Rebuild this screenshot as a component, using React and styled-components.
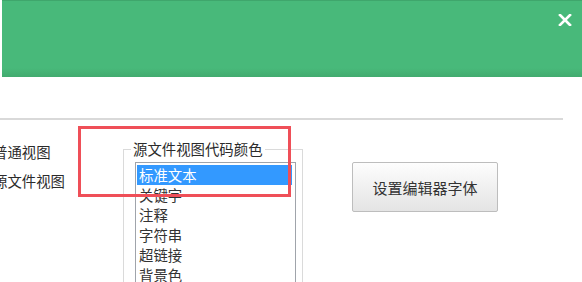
import React from 'react'
import styled, { createGlobalStyle } from 'styled-components'

const GlobalStyle = createGlobalStyle`
  html, body {
    margin: 0;
    padding: 0;
    background: #ffffff;
  }
  body {
    font-family: "Noto Sans CJK SC", "Liberation Sans", sans-serif;
    color: #333333;
  }
`

const Page = styled.div`
  position: relative;
  width: 582px;
  height: 282px;
  overflow: hidden;
  background: #ffffff;
`

const TitleBar = styled.header`
  height: 77px;
  margin-left: 2px;
  box-sizing: border-box;
  border-top: 1px solid #3fa66c;
  background-image: linear-gradient(
    to bottom,
    #48b97a 0%,
    #48b97a 88%,
    #42ab6f 100%
  );
  display: flex;
  justify-content: flex-end;
  align-items: flex-start;
  padding: 13px 10px 0 0;
`

const CloseButton = styled.button`
  border: 0;
  background: transparent;
  padding: 0;
  width: 14px;
  height: 14px;
  display: flex;
  cursor: pointer;
`

const Divider = styled.div`
  margin-top: 41px;
  width: 563px;
  height: 2px;
  background: #d9d9d9;
`

const Content = styled.div`
  display: flex;
  align-items: flex-start;
`

const ViewList = styled.div`
  width: 130px;
  margin-left: -7px;
  padding-top: 17px;
  display: flex;
  flex-direction: column;
  font-size: 14.4px;
  line-height: 29px;
  color: #2b2b2b;
  white-space: nowrap;
`

const GroupBox = styled.fieldset`
  width: 180px;
  box-sizing: border-box;
  margin: 20px 0 0 0;
  padding: 0 6px 0 11px;
  border: 1px solid #dadada;
  border-bottom: 0;
  min-width: 0;
`

const GroupTitle = styled.legend`
  margin-left: -4px;
  padding: 0 2px;
  font-size: 14.4px;
  line-height: 18px;
  color: #2b2b2b;
  white-space: nowrap;
`

const ListBox = styled.ul`
  list-style: none;
  margin: 4px 0 0 0;
  padding: 2px 0 0 0;
  width: 161px;
  height: 140px;
  box-sizing: border-box;
  border: 1px solid #a0a4ab;
  background: #ffffff;
`

const ListItem = styled.li`
  height: 20px;
  line-height: 20px;
  margin: 0 3px 0 1px;
  padding-left: 2px;
  font-size: 14.4px;
  white-space: nowrap;
  color: ${p => (p.$selected ? '#ffffff' : '#333333')};
  background: ${p => (p.$selected ? '#3399ff' : 'transparent')};
`

const FontButton = styled.button`
  margin: 42px 0 0 49px;
  width: 146px;
  height: 50px;
  box-sizing: border-box;
  border: 1px solid #bdbdbd;
  border-radius: 2px;
  background-image: linear-gradient(to bottom, #fdfdfd, #e4e4e4);
  font-family: "Noto Sans CJK SC", "Liberation Sans", sans-serif;
  font-size: 15px;
  color: #333333;
  padding: 0;
  cursor: pointer;
`

const Highlight = styled.div`
  position: absolute;
  left: 78px;
  top: 126px;
  width: 213px;
  height: 71px;
  box-sizing: border-box;
  border: 3px solid #ef4f58;
  pointer-events: none;
`

const items = ['标准文本', '关键字', '注释', '字符串', '超链接', '背景色', '选中']

const App = () => (
  <Page>
    <GlobalStyle />
    <TitleBar>
      <CloseButton aria-label="关闭">
        <svg width="14" height="12" viewBox="0 0 14 12">
          <path
            d="M2 1 L12 11 M12 1 L2 11"
            stroke="#ffffff"
            strokeWidth="2.6"
            strokeLinecap="square"
          />
        </svg>
      </CloseButton>
    </TitleBar>
    <Divider />
    <Content>
      <ViewList>
        <span>普通视图</span>
        <span>源文件视图</span>
      </ViewList>
      <GroupBox>
        <GroupTitle>源文件视图代码颜色</GroupTitle>
        <ListBox>
          { items.map((item, i) => (
            <ListItem key={ item } $selected={ i === 0 }>{ item }</ListItem>
          )) }
        </ListBox>
      </GroupBox>
      <FontButton>设置编辑器字体</FontButton>
    </Content>
    <Highlight />
  </Page>
)

export default App
